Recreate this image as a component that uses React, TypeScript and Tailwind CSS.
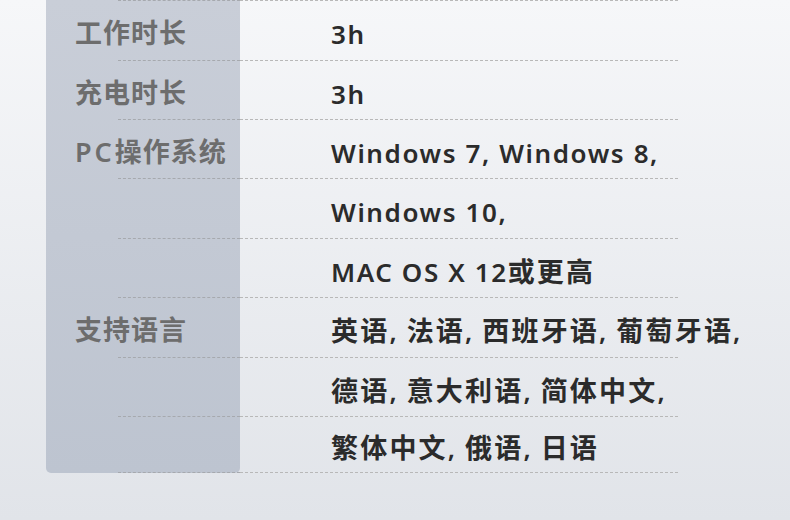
const rows = [
  { h: "h-[60px]", label: "工作时长", value: "3h" },
  { h: "h-[59px]", label: "充电时长", value: "3h" },
  { h: "h-[59px]", label: "PC操作系统", value: "Windows 7, Windows 8," },
  { h: "h-[60px]", label: "", value: "Windows 10," },
  { h: "h-[59px]", label: "", value: "MAC OS X 12或更高" },
  { h: "h-[60px]", label: "支持语言", value: "英语, 法语, 西班牙语, 葡萄牙语," },
  { h: "h-[59px]", label: "", value: "德语, 意大利语, 简体中文," },
  { h: "h-[56px]", label: "", value: "繁体中文, 俄语, 日语" },
];

const font = { fontFamily: '"Noto Sans", "Noto Sans CJK SC", sans-serif' };

// CJK runs get a touch more size and spacing than the latin text
function Value({ text }: { text: string }) {
  const parts = text.split(/([\u4e00-\u9fff]+)/).filter(Boolean);
  return (
    <>
      {parts.map((p, i) =>
        /[\u4e00-\u9fff]/.test(p) ? (
          <span key={i} className="text-[27px] tracking-[2.2px]">
            {p}
          </span>
        ) : (
          <span key={i}>{p.replace(/ /g, "\u00a0")}</span>
        )
      )}
    </>
  );
}

function Label({ text }: { text: string }) {
  if (text.startsWith("PC")) {
    return (
      <>
        <span className="tracking-[3px]">PC</span>
        {text.slice(2)}
      </>
    );
  }
  return <>{text}</>;
}

export default function App() {
  return (
    <div
      className="w-[790px] h-[520px] overflow-hidden bg-gradient-to-b from-[#f6f7f9] to-[#e1e4e9]"
      style={font}
    >
      <div className="flex">
        {/* label panel */}
        <div className="ml-[46px] w-[194px] flex flex-col rounded-b-[5px] bg-gradient-to-b from-[#c9ced8] to-[#bdc4d0]">
          <div className="ml-[72px] border-t border-dashed border-[#a6a9ae]" />
          {rows.map((r, i) => (
            <div key={i} className={`${r.h} flex flex-col`}>
              <div className="flex-1 flex items-center pl-[29px] pt-[6px] text-[27px] tracking-[1px] font-semibold text-[#6d6d6d] whitespace-nowrap">
                <Label text={r.label} />
              </div>
              <div className="ml-[72px] border-b border-dashed border-[#a6a9ae]" />
            </div>
          ))}
        </div>
        {/* values */}
        <div className="w-[438px] flex flex-col">
          <div className="border-t border-dashed border-[#b8b8b8]" />
          {rows.map((r, i) => (
            <div key={i} className={`${r.h} flex flex-col`}>
              <div className="flex-1 flex items-center pl-[91px] pt-[8px] text-[26px] tracking-[1.6px] font-semibold text-[#2b2b2b] whitespace-nowrap">
                <Value text={r.value} />
              </div>
              <div className="border-b border-dashed border-[#b8b8b8]" />
            </div>
          ))}
        </div>
      </div>
    </div>
  );
}
